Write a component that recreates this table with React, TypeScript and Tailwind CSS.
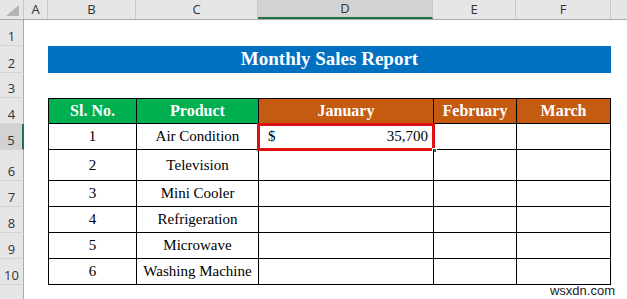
import React from "react";

const cols = [
    { name: "A", w: "w-[24px]" },
    { name: "B", w: "w-[88px]" },
    { name: "C", w: "w-[122px]" },
    { name: "D", w: "w-[175px]" },
    { name: "E", w: "w-[83px]" },
    { name: "F", w: "w-[95px]" },
];

const products = [
    "Air Condition",
    "Television",
    "Mini Cooler",
    "Refrigeration",
    "Microwave",
    "Washing Machine",
];

const serif = "font-['Liberation_Serif','Times_New_Roman',serif]";

function RowHead({ n, selected }: { n?: number; selected?: boolean }) {
    return (
        <div
            className={
                "w-[24px] shrink-0 h-full flex items-end justify-center pb-[1px] text-[13px] leading-[16px] text-[#333] border-b border-[#d4d4d4] " +
                (selected
                    ? "bg-[#d2d2d2] border-r-2 border-r-[#217346]"
                    : "bg-[#e6e6e6] border-r border-r-[#ababab]")
            }
        >
            {n}
        </div>
    );
}

function Cell({
    w,
    className = "",
    children,
}: {
    w: string;
    className?: string;
    children?: React.ReactNode;
}) {
    return (
        <div className={`${w} shrink-0 h-full flex items-center justify-center ${className}`}>
            {children}
        </div>
    );
}

export default function App() {
    const heights = ["h-[26px]", "h-[31px]", "h-[26px]", "h-[26px]", "h-[26px]", "h-[26px]"];

    return (
        <div className="w-[627px] h-[299px] bg-white overflow-hidden relative font-['Open_Sans','Noto_Sans',sans-serif]">
            {/* column headers */}
            <div className="flex h-[20px] bg-[#e6e6e6] border-b border-[#ababab]">
                <div className="w-[24px] shrink-0 flex items-end justify-end pr-[4px] pb-[3px] border-r border-[#c8c8c8]">
                    <svg width="13" height="11" viewBox="0 0 13 11">
                        <polygon points="13,0 13,11 0,11" fill="#b4b4b4" />
                    </svg>
                </div>
                {cols.map((c) => (
                    <div
                        key={c.name}
                        className={
                            `${c.w} shrink-0 flex items-center justify-center text-[13px] text-[#333] border-r border-[#c8c8c8] ` +
                            (c.name === "D" ? "bg-[#d2d2d2] border-b-2 border-b-[#217346] text-[#222]" : "")
                        }
                    >
                        {c.name}
                    </div>
                ))}
                <div className="flex-1" />
            </div>

            {/* row 1 */}
            <div className="flex h-[26px]">
                <RowHead n={1} />
            </div>

            {/* row 2 title */}
            <div className="flex h-[27px]">
                <RowHead n={2} />
                <Cell w="w-[24px]" />
                <div
                    className={`w-[563px] shrink-0 h-full bg-[#0070c0] text-white font-bold text-[19px] flex items-center justify-center ${serif}`}
                >
                    Monthly Sales Report
                </div>
            </div>

            {/* row 3 */}
            <div className="flex h-[25px]">
                <RowHead n={3} />
            </div>

            {/* row 4 table header */}
            <div className="flex h-[26px]">
                <RowHead n={4} />
                <Cell w="w-[24px]" />
                <div className={`flex h-full border-y border-l border-black text-white font-bold text-[16px] ${serif}`}>
                    <Cell w="w-[88px]" className="bg-[#00b050] border-r border-black">Sl. No.</Cell>
                    <Cell w="w-[122px]" className="bg-[#00b050] border-r border-black">Product</Cell>
                    <Cell w="w-[175px]" className="bg-[#c55a11] border-r border-black">January</Cell>
                    <Cell w="w-[83px]" className="bg-[#c55a11] border-r border-black">February</Cell>
                    <Cell w="w-[94px]" className="bg-[#c55a11] border-r border-black">March</Cell>
                </div>
            </div>

            {/* data rows */}
            {products.map((p, i) => (
                <div key={p} className={`flex ${heights[i]}`}>
                    <RowHead n={i + 5} selected={i === 0} />
                    <Cell w="w-[24px]" />
                    <div className={`flex h-full border-b border-l border-black text-[15px] text-black ${serif}`}>
                        <Cell w="w-[88px]" className="border-r border-black">{i + 1}</Cell>
                        <Cell w="w-[122px]" className="border-r border-black">{p}</Cell>
                        <div className="w-[175px] shrink-0 h-full border-r border-black relative flex items-center justify-between pl-[9px] pr-[5px]">
                            {i === 0 && (
                                <>
                                    <span>$</span>
                                    <span>35,700</span>
                                    <div className="absolute -left-[2px] -top-[1px] -right-[2px] -bottom-[2px] border-[3px] border-[#e01010]" />
                                    <div className="absolute -right-[4px] -bottom-[4px] w-[5px] h-[5px] bg-[#217346] border border-white" />
                                </>
                            )}
                        </div>
                        <Cell w="w-[83px]" className="border-r border-black" />
                        <Cell w="w-[94px]" className="border-r border-black" />
                    </div>
                </div>
            ))}

            {/* row 11 */}
            <div className="flex h-[20px]">
                <RowHead />
            </div>

            <div className="absolute right-[12px] bottom-[2px] text-[13px] text-[#222] font-['Liberation_Sans',sans-serif] leading-none">
                wsxdn.com
            </div>
        </div>
    );
}
